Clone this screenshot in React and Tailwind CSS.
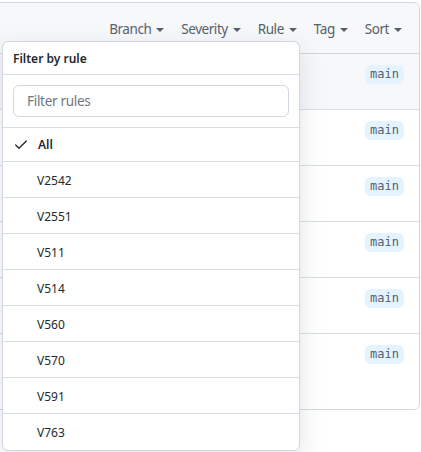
import { Check } from "lucide-react";

const filters = ["Branch", "Severity", "Rule", "Tag", "Sort"];
const rules = ["V2542", "V2551", "V511", "V514", "V560", "V570", "V591", "V763"];
const rows = [true, false, false, false, false, false];

function Caret() {
  return (
    <svg width="8" height="4" viewBox="0 0 8 4" className="ml-[5px] mt-[1px]">
      <path d="M0 0h8L4 4z" fill="#57606a" />
    </svg>
  );
}

export default function App() {
  return (
    <div
      className="relative w-[421px] h-[452px] bg-white overflow-hidden"
      style={{ fontFamily: '"Segoe UI", "Noto Sans", "Liberation Sans", sans-serif' }}
    >
      <div className="ml-[-20px] mr-px mt-[2px] border border-[#d0d7de] rounded-md overflow-hidden">
        <div className="h-[51px] bg-[#f6f8fa] border-b border-[#d0d7de] flex justify-end items-center gap-[17px] pr-[17px] pt-[3px]">
          {filters.map((f) => (
            <div key={f} className="flex items-center text-[13.5px] tracking-[-0.45px] text-[#57606a]">
              {f}
              <Caret />
            </div>
          ))}
        </div>
        {rows.map((hover, i) => (
          <div
            key={i}
            className={`flex justify-end pt-[11px] pr-[15px] ${i === 5 ? "h-[75px]" : "h-[56px] border-b border-[#d8dee4]"} ${hover ? "bg-[#f6f8fa]" : "bg-white"}`}
          >
            <span className="h-[19px] px-[5px] rounded-md bg-[#e5f3ff] text-[12px] leading-[19px] text-[#57606a] font-['DejaVu_Sans_Mono',monospace]">
              main
            </span>
          </div>
        ))}
      </div>

      <div className="absolute left-[2px] top-[41px] w-[298px] bg-white border border-[#d0d7de] rounded-md shadow-[0_8px_24px_rgba(140,149,159,0.25)]">
        <div className="h-[33px] flex items-center pt-[2px] px-[10px] border-b border-[#d8dee4] text-[12px] font-semibold text-[#24292f]">
          Filter by rule
        </div>
        <div className="p-[10px] border-b border-[#d8dee4]">
          <div className="h-[32px] border border-[#d0d7de] rounded-md flex items-center px-[13px] text-[13.5px] tracking-[-0.3px] text-[#6e7781]">
            Filter rules
          </div>
        </div>
        <div className="h-[34px] flex items-center border-b border-[#d8dee4] text-[12px] font-semibold text-[#24292f]">
          <Check size={16} strokeWidth={2} className="ml-[10px] mr-[9px] text-[#24292f]" />
          All
        </div>
        {rules.map((r, i) => (
          <div
            key={r}
            className={`h-[36px] flex items-center pl-[34px] pt-[2px] text-[12px] text-[#24292f] ${i < rules.length - 1 ? "border-b border-[#d8dee4]" : ""}`}
          >
            {r}
          </div>
        ))}
      </div>
    </div>
  );
}
